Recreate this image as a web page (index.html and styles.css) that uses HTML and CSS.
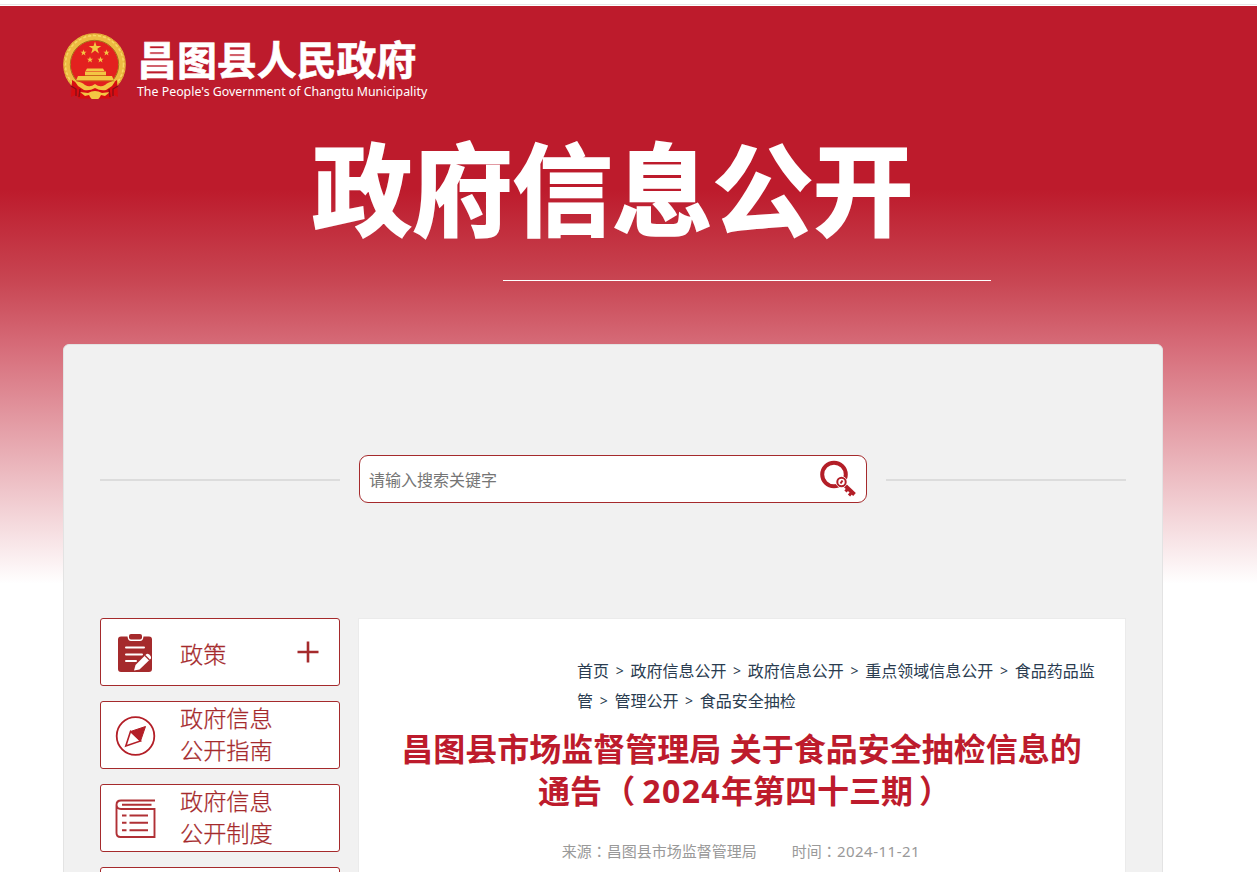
FILE: index.html
```html
<!DOCTYPE html>
<html lang="zh-CN">
<head>
<meta charset="utf-8">
<title>昌图县人民政府 政府信息公开</title>
<link rel="stylesheet" href="styles.css">
</head>
<body>
<div class="page">
  <header class="header">
    <div class="brand">
      <svg class="emblem" viewBox="0 0 66 70">
        <circle cx="31.500" cy="31.500" r="27.600" fill="#e3211f" stroke="#edbb42" stroke-width="7.400"/>
        <circle cx="31.500" cy="31.500" r="29" fill="none" stroke="#f8d765" stroke-width="1.500" stroke-dasharray="3 2"/>
        <circle cx="31.500" cy="31.500" r="30.600" fill="none" stroke="#d79a2b" stroke-width="1" stroke-dasharray="2 2"/>
        <circle cx="31.500" cy="31.500" r="24.200" fill="none" stroke="#a8701c" stroke-width="1"/>
        <path d="M9 47 L8 64 L12 62 L16 65.500 H47 L51 62 L55 64 L54 47 L45 53 H19Z" fill="#d60d12"/>
        <g fill="#f3c643">
          <path d="M32 8.500 l1.500 4.500 h4.800 l-3.900 2.800 1.500 4.600 -3.900 -2.800 -3.900 2.800 1.500 -4.600 -3.900 -2.800 h4.800z"/>
          <path id="star" d="M20.500 16.500 l.8 2.200 h2.300 l-1.800 1.400 .6 2.300 -1.900 -1.400 -1.900 1.400 .6 -2.300 -1.800 -1.400 h2.300z"/>
          <use href="#star" x="23"/><use href="#star" x="6.500" y="7"/><use href="#star" x="17" y="7"/>
          <path d="M24 35.500 h16 l1.500 2.500 h-19z M22 38.500 h21 v3.500 h-21z M15 43 h34 l2 4.500 h-38z"/>
          <path d="M12 48.500 Q18 48 22 52 Q27 55 32 51 Q37 55 42 52 Q46 48 52 48.500 L49 53 L43 57 Q37 58 32 55 Q27 58 21 57 L15 53Z"/>
          <path d="M17 59 l8 1 q7 -4 14 0 l8 -1 -5 4 -4 -1 q-2 4 -3 4 h-6 q-1 0 -3 -4 l-4 1z"/>
        </g>
        <path d="M22 42.500 h21 M13 47.800 h38" stroke="#c77a1a" stroke-width=".8"/>
        <path d="M8 53 l5 3 v7 M55 53 l-5 3 v7 M17 56 l-1 8 M46 56 l1 8" fill="none" stroke="#850f16" stroke-width="1.300"/>
      </svg>
      <div class="brand-text">
        <div class="brand-cn">昌图县人民政府</div>
        <div class="brand-en">The People's Government of Changtu Municipality</div>
      </div>
    </div>
    <h1 class="banner">政府信息公开</h1>
    <div class="banner-line"></div>
  </header>
  <main class="panel">
    <div class="search-row">
      <span class="rule"></span>
      <div class="search">
        <input class="search-input" type="text" placeholder="请输入搜索关键字">
        <svg class="search-icon" viewBox="0 0 38 38" fill="none" stroke="#b31e27">
          <circle cx="15" cy="14.500" r="11.800" stroke-width="4"/>
          <path d="M25 24.500 L35.500 34.500" stroke-width="3.800"/>
          <path d="M29.500 28 l-3 3.500 M33.500 31.500 l-3.500 4" stroke-width="3"/>
          <circle cx="22.500" cy="22" r="5.500" fill="#fff" stroke="#fff" stroke-width="1"/>
          <circle cx="22.500" cy="22" r="4.200" fill="#fff" stroke-width="2"/>
          <path d="M21.500 23.500 l2 -3" stroke-width="2"/>
        </svg>
      </div>
      <span class="rule"></span>
    </div>
    <div class="columns">
      <nav class="menu">
        <a class="item">
          <svg class="icon" viewBox="0 0 42 42">
            <path d="M6 4.500 H12.500 Q13 9 16 9 H25 Q28 9 28.500 4.500 H34 Q37 4.500 37 7.500 V37 Q37 40 34 40 H6 Q3 40 3 37 V7.500 Q3 4.500 6 4.500Z" fill="#a52a2c"/>
            <rect x="14" y="2" width="13" height="5.500" rx="2" fill="#a52a2c"/>
            <path d="M11 15.500 H29 M11 22.500 H27 M11 29 H21" stroke="#fff" stroke-width="2" stroke-linecap="round"/>
            <path d="M19 38.500 L20.500 33 L31.500 22 Q34 21 36 24.500 L36 26.500 L24.500 37.500Z" fill="#fff"/>
            <path d="M30 23.500 L34.500 28" stroke="#a52a2c" stroke-width="1.200"/>
          </svg>
          <span class="label single">政策</span>
          <svg class="plus" viewBox="0 0 22 22"><path d="M11 .5 V21.500 M.5 11 H21.500" stroke="#a52a2c" stroke-width="2.600"/></svg>
        </a>
        <a class="item">
          <svg class="icon" viewBox="0 0 42 42" fill="none" stroke="#b31e27" stroke-width="1.800">
            <circle cx="20.500" cy="21" r="18.800"/>
            <path d="M30.500 11.500 L15.500 16.500 L25.500 26Z" fill="#b31e27" stroke-width="1"/>
            <path d="M15.500 16.500 L10.800 31 L25.500 26Z" stroke-width="1.600"/>
          </svg>
          <span class="label">政府信息<br>公开指南</span>
        </a>
        <a class="item">
          <svg class="icon" viewBox="0 0 42 42" fill="none" stroke="#b03035" stroke-width="1.900">
            <path d="M40 2.500 H6 Q1.500 2.500 1.500 7 V35 Q1.500 39 5.500 39 H39.500 V11 H6 Q1.500 11 1.500 6.500 M7 6.800 H36.500 M7 17.500 H11.500 M14.500 17.500 H33 M7 24.800 H11.500 M14.500 24.800 H33 M7 32.200 H11.500 M14.500 32.200 H33"/>
          </svg>
          <span class="label">政府信息<br>公开制度</span>
        </a>
        <a class="item"></a>
      </nav>
      <article class="article">
        <div class="crumbs">
          <div class="crumb-line"><a>首页</a><i>&gt;</i><a>政府信息公开</a><i>&gt;</i><a>政府信息公开</a><i>&gt;</i><a>重点领域信息公开</a><i>&gt;</i><a>食品药品监</a></div>
          <div class="crumb-line"><a>管</a><i>&gt;</i><a>管理公开</a><i>&gt;</i><a>食品安全抽检</a></div>
        </div>
        <h2 class="title">昌图县市场监督管理局 关于食品安全抽检信息的<br>通告 <span class="open">（</span><span class="year">2024</span>年第四十三期<span class="close">）</span></h2>
        <div class="meta"><span>来源<b lang="zh-TW">：</b>昌图县市场监督管理局</span><span>时间<b lang="zh-TW">：</b><span class="date">2024-11-21</span></span></div>
      </article>
    </div>
  </main>
</div>
</body>
</html>
```
FILE: styles.css
```css
* { box-sizing: border-box; }
body {
  margin: 0;
  height: 872px;
  overflow: hidden;
  background: #fff;
  font-family: "Noto Sans", "Noto Sans CJK SC", sans-serif;
}
.page {
  height: 872px;
  overflow: hidden;
  padding-top: 6px;
  background:
    linear-gradient(#fff 0 4px, #e6e6e6 4px 5px, #fff 5px 6px, transparent 6px),
    linear-gradient(#bd1b2c 0 190px, #c84552 280px, #d66b78 345px, #fff 584px);
}
.header { width: 1100px; height: 338px; margin-left: 63px; }
.brand { display: flex; padding-top: 27px; height: 102px; }
.emblem { width: 66px; height: 70px; }
.brand-text { padding-left: 8px; color: #fff; white-space: nowrap; }
.brand-cn {
  font-size: 40px;
  font-weight: 700;
  line-height: 54px;
  height: 50px;
  letter-spacing: -.1px;
  -webkit-text-stroke: .6px #fff;
}
.brand-en { font-family: "Noto Sans", sans-serif; font-size: 12.370px; line-height: 18px; }
.banner {
  margin: 0 0 0 249px;
  height: 172px;
  line-height: 163px;
  font-size: 100.200px;
  font-weight: 700;
  color: #fff;
  white-space: nowrap;
  -webkit-text-stroke: 2px #fff;
}
.banner-line { width: 488px; height: 1px; margin-left: 440px; background: #fff; }
.panel {
  width: 1100px;
  height: 700px;
  margin-left: 63px;
  padding: 110px 36px 0;
  background: #f1f1f1;
  border: 1px solid #e3e3e3;
  border-radius: 6px;
}
.search-row { display: flex; justify-content: space-between; align-items: center; height: 48px; }
.rule { width: 240px; height: 2px; margin-top: 2px; background: #dcdcdc; }
.search {
  display: flex;
  align-items: center;
  width: 508px;
  height: 48px;
  padding: 0 9px;
  background: #fff;
  border: 1px solid #a52a2c;
  border-radius: 9px;
}
.search-input {
  flex: 1;
  padding: 0;
  border: 0;
  outline: 0;
  background: none;
  font: 16px "Noto Sans CJK SC", sans-serif;
}
.search-input::placeholder { color: #757575; }
.search-icon { width: 38px; height: 38px; }
.columns { display: flex; gap: 18px; margin-top: 115px; }
.menu { display: flex; flex-direction: column; gap: 15px; width: 240px; }
.item {
  display: flex;
  align-items: center;
  height: 68px;
  flex: none;
  padding: 0 20px 0 14px;
  background: #fff;
  border: 1px solid #a52a2c;
  border-radius: 3px;
  color: #a52a2c;
}
.icon { width: 42px; height: 42px; margin-top: 2px; }
.label {
  flex: 1;
  padding: 0 0 4px 23px;
  font-family: "Noto Sans CJK SC", sans-serif;
  font-size: 23.200px;
  line-height: 32px;
  font-weight: 300;
  -webkit-text-stroke: .25px #a52a2c;
}
.single { padding: 1px 0 0 23px; }
.plus { width: 22px; height: 22px; }
.article { width: 768px; height: 420px; background: #fff; border: 1px solid #ebebeb; }
.crumbs { margin: 37px 0 0 218px; font-size: 16px; color: #2a3c50; white-space: nowrap; }
.crumb-line { display: flex; height: 30px; line-height: 30px; }
.crumb-line i { width: 21.400px; text-align: center; font-style: normal; font-size: 14px; }
.title {
  margin: 12px 0 0;
  padding-right: 1px;
  text-align: center;
  font-size: 32px;
  line-height: 42px;
  font-weight: 700;
  color: #bd1b2c;
  white-space: nowrap;
}
.year { letter-spacing: 1.400px; }
.open { margin: 0 7px 0 -7px; }
.close { margin: 0 -6px 0 6px; }
.meta {
  display: flex;
  justify-content: center;
  gap: 35px;
  margin-top: 28px;
  padding-right: 2px;
  font-size: 15px;
  line-height: 22px;
  color: #999;
}
.meta b { font-family: "Noto Sans CJK TC", sans-serif; font-weight: 400; }
.date { letter-spacing: .5px; }
```
